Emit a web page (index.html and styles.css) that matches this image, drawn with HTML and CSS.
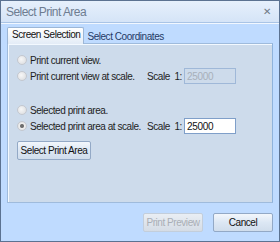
FILE: index.html
```html
<!DOCTYPE html>
<html lang="en">
<head>
    <meta charset="UTF-8">
    <title>Select Print Area</title>
    <link rel="stylesheet" href="styles.css">
</head>
<body>
    <div class="window">
        <div class="titlebar">
            <span class="title">Select Print Area</span>
            <span class="close">&#x2715;</span>
        </div>
        <div class="content">
            <div class="tabs">
                <div class="tab active">Screen Selection</div>
                <div class="tab">Select Coordinates</div>
            </div>
            <div class="panel">
                <div class="row first">
                    <span class="radio"></span>
                    <span class="label">Print current view.</span>
                </div>
                <div class="row">
                    <span class="radio"></span>
                    <span class="label">Print current view at scale.</span>
                    <span class="scale">Scale&nbsp; 1:</span>
                    <input class="scale-input" type="text" value="25000" disabled>
                </div>
                <div class="row group">
                    <span class="radio"></span>
                    <span class="label">Selected print area.</span>
                </div>
                <div class="row">
                    <span class="radio checked"></span>
                    <span class="label">Selected print area at scale.</span>
                    <span class="scale">Scale&nbsp; 1:</span>
                    <input class="scale-input" type="text" value="25000">
                </div>
                <button class="btn select-btn">Select Print Area</button>
            </div>
            <div class="footer">
                <button class="btn footer-btn" disabled>Print Preview</button>
                <button class="btn footer-btn">Cancel</button>
            </div>
        </div>
    </div>
</body>
</html>
```

FILE: styles.css
```css
body {
    margin: 0;
    padding: 0;
    font-family: "Liberation Sans", Arial, sans-serif;
    font-size: 10px;
    letter-spacing: -0.45px;
    color: #1e1e1e;
    white-space: nowrap;
}

.window {
    width: 280px;
    height: 242px;
    box-sizing: border-box;
    border: 1px solid #5b7291;
    background: #bfdbff;
    display: flex;
    flex-direction: column;
}

.titlebar {
    height: 21px;
    display: flex;
    align-items: center;
    justify-content: space-between;
    padding: 0 8px 0 5px;
    background: linear-gradient(to bottom, #e6f0fc, #d5e4f7);
    border-bottom: 1px solid #a9c4e6;
}

.title {
    font-size: 12px;
    letter-spacing: -0.55px;
    color: #6e7d91;
}

.close {
    font-size: 10px;
    color: #707a86;
}

.content {
    flex: 1;
    display: flex;
    flex-direction: column;
    padding: 2px 6px 0 6px;
    border-top: 1px solid #f1f7ff;
}

.tabs {
    display: flex;
    height: 17px;
    align-items: flex-end;
}

.tab {
    padding: 2px 5px 1px 3px;
    color: #1f3a66;
}

.tab.active {
    height: 14px;
    padding: 1px 3px 1px 4px;
    color: #111;
    background: linear-gradient(to bottom, #ffffff, #e3ecf7);
    border: 1px solid #9cb6d6;
    border-bottom: none;
    border-radius: 2px 2px 0 0;
    margin-bottom: -1px;
    position: relative;
}

.panel {
    height: 160px;
    box-sizing: border-box;
    background: #cddbeb;
    border: 1px solid #9fbbdc;
    border-right-color: #8fb3dc;
    box-shadow: inset 1px 1px 0 #f3f9ff;
    padding: 8px 9px 0 9px;
    display: flex;
    flex-direction: column;
}

.row {
    display: flex;
    align-items: center;
    height: 16px;
}

.row.group {
    margin-top: 18px;
}

.radio {
    width: 10px;
    height: 10px;
    border-radius: 50%;
    box-sizing: border-box;
    border: 1px solid #c4c8cf;
    background: radial-gradient(circle at 40% 40%, #f7f7f7, #d8dadd);
    margin-right: 3px;
    flex: none;
}

.radio.checked {
    background: radial-gradient(circle, #6e6e6e 0 1.5px, #efefef 2.5px, #d8dadd);
}

.label {
    width: 117px;
}

.scale {
    width: 37px;
}

.scale-input {
    width: 52px;
    height: 16px;
    box-sizing: border-box;
    font-family: inherit;
    font-size: 10px;
    letter-spacing: -0.3px;
    padding: 0 2px;
    border: 1px solid #7f9fc9;
    background: #fff;
    color: #111;
    margin: 0;
}

.scale-input:disabled {
    background: #cddbeb;
    border-color: #9fb8d8;
    color: #a8b0ba;
}

.btn {
    font-family: inherit;
    font-size: 10px;
    letter-spacing: -0.45px;
    color: #111;
    border: 1px solid #93a9c6;
    border-radius: 2px;
    background: linear-gradient(to bottom, #f3f7fc, #dce7f4 50%, #d0ddec);
    padding: 0;
    margin: 0;
}

.select-btn {
    align-self: flex-start;
    margin-top: 7px;
    width: 74px;
    height: 19px;
}

.footer {
    display: flex;
    justify-content: flex-end;
    gap: 10px;
    margin-top: 10px;
}

.footer-btn {
    width: 60px;
    height: 19px;
}

.footer-btn:disabled {
    color: #a9aeb5;
    border-color: #c3cedb;
    background: linear-gradient(to bottom, #e9eef4, #d5dce5);
}
```
